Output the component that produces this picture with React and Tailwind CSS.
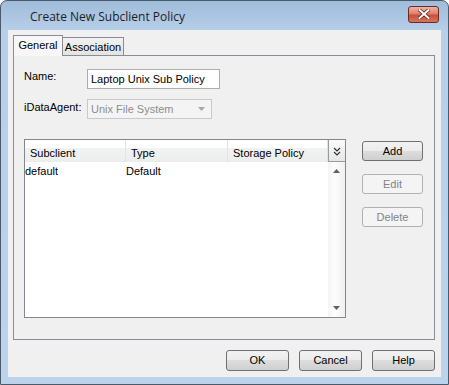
import React from "react";

const font = { fontFamily: '"Liberation Sans", Arial, sans-serif' };

const Button = ({ label, disabled, className = "" }) => (
    <div
        className={`flex items-center justify-center rounded-[3px] border text-[11px] ${
            disabled
                ? "border-[#adb2b5] bg-[#f4f4f4] text-[#838383]"
                : "border-[#707070] bg-[linear-gradient(#f2f2f2_0%,#ebebeb_50%,#dddddd_50%,#cfcfcf_100%)] text-black"
        } ${className}`}
    >
        {label}
    </div>
);

const HeaderCell = ({ label, width }) => (
    <div
        className={`${width} flex h-full items-center border-r border-[#e3e3e3] bg-[linear-gradient(#ffffff_0%,#ffffff_35%,#f1f2f2_35%,#eceded_100%)] pl-[5px] pt-[4px] text-[11px]`}
    >
        {label}
    </div>
);

export default function App() {
    return (
        <div className="h-[385px] w-[449px] bg-white" style={font}>
            <div className="flex h-[385px] w-[449px] flex-col overflow-hidden rounded-t-[7px] border border-[#4a5a6b] bg-[linear-gradient(#9fbcda_0px,#b7cfe9_30px,#bcd3ec_100%)]">
                {/* title bar */}
                <div className="flex h-[29px] shrink-0 items-center justify-between pl-[29px] pr-[9px]">
                    <span
                        className="pt-[2px] text-[12px] text-[#1e1e1e]"
                        style={{ fontFamily: '"Open Sans", "Liberation Sans", sans-serif' }}
                    >
                        Create New Subclient Policy
                    </span>
                    <div className="mt-[-3px] flex h-[17px] w-[31px] items-center justify-center rounded-[3px] border border-[#6b2a22] bg-[linear-gradient(#eeb3a5_0%,#de8069_45%,#cc4e36_55%,#d8745c_100%)]">
                        <svg width="12" height="10" viewBox="0 0 12 10">
                            <path
                                d="M1.5 1 L10.5 9 M10.5 1 L1.5 9"
                                stroke="#5a2018"
                                strokeWidth="3.4"
                                strokeLinecap="square"
                            />
                            <path
                                d="M1.5 1 L10.5 9 M10.5 1 L1.5 9"
                                stroke="#ffffff"
                                strokeWidth="2"
                                strokeLinecap="square"
                            />
                        </svg>
                    </div>
                </div>

                {/* client area */}
                <div className="mx-[7px] flex h-[347px] shrink-0 flex-col bg-[#f0f0f0] pl-[5px] pr-[6px] pt-[5px]">
                    {/* tabs */}
                    <div className="flex h-[20px] items-end text-[11px]">
                        <div className="relative z-10 mb-[-1px] flex h-[21px] w-[50px] items-center justify-center border border-b-0 border-[#898c95] bg-[#f7f7f7] pb-[1px]">
                            General
                        </div>
                        <div className="flex h-[18px] w-[61px] items-center justify-center border border-b-0 border-l-0 border-[#898c95] bg-[linear-gradient(#f2f2f2,#e3e3e3)] pt-[2px]">
                            Association
                        </div>
                    </div>

                    {/* panel */}
                    <div className="flex h-[285px] flex-col border border-[#898c95] bg-[#f0f0f0] pl-[10px]">
                        <div className="mt-[13px] flex h-[20px] items-center">
                            <span className="w-[63px] pb-[6px] text-[11px]">Name:</span>
                            <div className="flex h-[20px] w-[133px] items-center border border-[#abadb3] bg-white pl-[3px] text-[11px]">
                                Laptop Unix Sub Policy
                            </div>
                        </div>
                        <div className="mt-[10px] flex h-[20px] items-center">
                            <span className="w-[63px] pb-[3px] text-[11px]">iDataAgent:</span>
                            <div className="flex h-[20px] w-[125px] items-center justify-between border border-[#c9c9c9] bg-[#f4f4f4] pl-[3px] pr-[6px] text-[11px] text-[#8d8d8d]">
                                Unix File System
                                <svg width="7" height="4" viewBox="0 0 7 4">
                                    <path d="M0 0 H7 L3.5 4 Z" fill="#a8a8a8" />
                                </svg>
                            </div>
                        </div>

                        <div className="mt-[20px] flex">
                            {/* table */}
                            <div className="flex h-[179px] w-[322px] flex-col border border-[#828790] bg-white">
                                <div className="flex h-[22px] shrink-0">
                                    <HeaderCell label="Subclient" width="w-[101px]" />
                                    <HeaderCell label="Type" width="w-[102px]" />
                                    <HeaderCell label="Storage Policy" width="w-[100px]" />
                                    <div className="flex w-[17px] items-center justify-center border-b border-l border-[#9a9a9a] bg-[linear-gradient(#fbfbfb,#e6e6e6)] pt-[2px]">
                                        <svg width="8" height="9" viewBox="0 0 8 9">
                                            <path
                                                d="M1 1 L4 4 L7 1 M1 5 L4 8 L7 5"
                                                stroke="#333"
                                                strokeWidth="1.2"
                                                fill="none"
                                            />
                                        </svg>
                                    </div>
                                </div>
                                <div className="flex flex-1">
                                    <div className="flex-1">
                                        <div className="flex h-[19px] items-center text-[11px]">
                                            <span className="w-[101px]">default</span>
                                            <span>Default</span>
                                        </div>
                                    </div>
                                    <div className="flex w-[17px] flex-col items-center justify-between bg-[linear-gradient(90deg,#f4f4f4,#fdfdfd_40%,#f0f0f0)] pb-[7px] pt-[7px]">
                                        <svg width="7" height="4" viewBox="0 0 7 4">
                                            <path d="M0 4 H7 L3.5 0 Z" fill="#606060" />
                                        </svg>
                                        <svg width="7" height="4" viewBox="0 0 7 4">
                                            <path d="M0 0 H7 L3.5 4 Z" fill="#606060" />
                                        </svg>
                                    </div>
                                </div>
                            </div>

                            {/* side buttons */}
                            <div className="ml-[16px] mt-[2px] flex flex-col gap-[13px]">
                                <Button label="Add" className="h-[20px] w-[61px]" />
                                <Button label="Edit" disabled className="h-[20px] w-[61px]" />
                                <Button label="Delete" disabled className="h-[20px] w-[61px]" />
                            </div>
                        </div>
                    </div>

                    {/* bottom buttons */}
                    <div className="mt-[10px] flex justify-end gap-[10px]">
                        <Button label="OK" className="h-[21px] w-[63px]" />
                        <Button label="Cancel" className="h-[21px] w-[63px]" />
                        <Button label="Help" className="h-[21px] w-[63px]" />
                    </div>
                </div>
            </div>
        </div>
    );
}
